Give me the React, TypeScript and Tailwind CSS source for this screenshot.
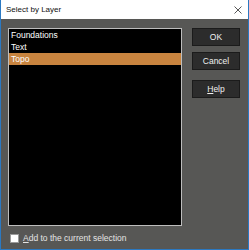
import React, { useState } from 'react';

const layers = ['Foundations', 'Text', 'Topo'];

const DlgButton: React.FC<{ label: React.ReactNode }> = ({ label }) => (
  <button className="w-[48px] h-[18px] bg-[#2c2c2c] border border-[#1b1b1b] text-[8.5px] leading-none text-[#f0f0f0] flex items-center justify-center">
    {label}
  </button>
);

const App: React.FC = () => {
  const [selected, setSelected] = useState('Topo');
  const [addToSel, setAddToSel] = useState(false);

  return (
    <div
      className="w-[249px] h-[250px] flex flex-col border-x border-b border-[#2b79c2] bg-[#575755]"
      style={{ fontFamily: '"Liberation Sans", Arial, sans-serif' }}
    >
      {/* title bar */}
      <div className="h-[19px] bg-white flex items-center justify-between pl-[5px] pr-[6px]">
        <span className="text-[8px] text-[#111]">Select by Layer</span>
        <svg width="8" height="8" viewBox="0 0 8 8">
          <path d="M0.5 0.5 L7.5 7.5 M7.5 0.5 L0.5 7.5" stroke="#444" strokeWidth="0.9" />
        </svg>
      </div>

      <div className="flex-1 flex flex-col pl-[7px] pt-[9px]">
        <div className="flex gap-[10px]">
          {/* layer list */}
          <div className="w-[174px] h-[198px] bg-black border border-[#bdbdbd]">
            {layers.map((name) => (
              <div
                key={name}
                onClick={() => setSelected(name)}
                className={`h-[12px] pl-[2px] text-[8.5px] leading-[12px] text-white ${
                  selected === name ? 'bg-[#c8843f]' : ''
                }`}
              >
                {name}
              </div>
            ))}
          </div>

          {/* buttons */}
          <div className="flex flex-col gap-[6px]">
            <DlgButton label="OK" />
            <DlgButton label="Cancel" />
            <div className="mt-[4px]">
              <DlgButton label={<span><u>H</u>elp</span>} />
            </div>
          </div>
        </div>

        {/* add to selection */}
        <label className="flex items-center gap-[4px] pl-[2px] mt-[6px] text-[8.5px] text-[#e4e4e4]">
          <input
            type="checkbox"
            checked={addToSel}
            onChange={(e) => setAddToSel(e.target.checked)}
            className="appearance-none w-[9px] h-[9px] bg-white border border-[#9a9a9a]"
          />
          <span><u>A</u>dd to the current selection</span>
        </label>
      </div>
    </div>
  );
};

export default App;
